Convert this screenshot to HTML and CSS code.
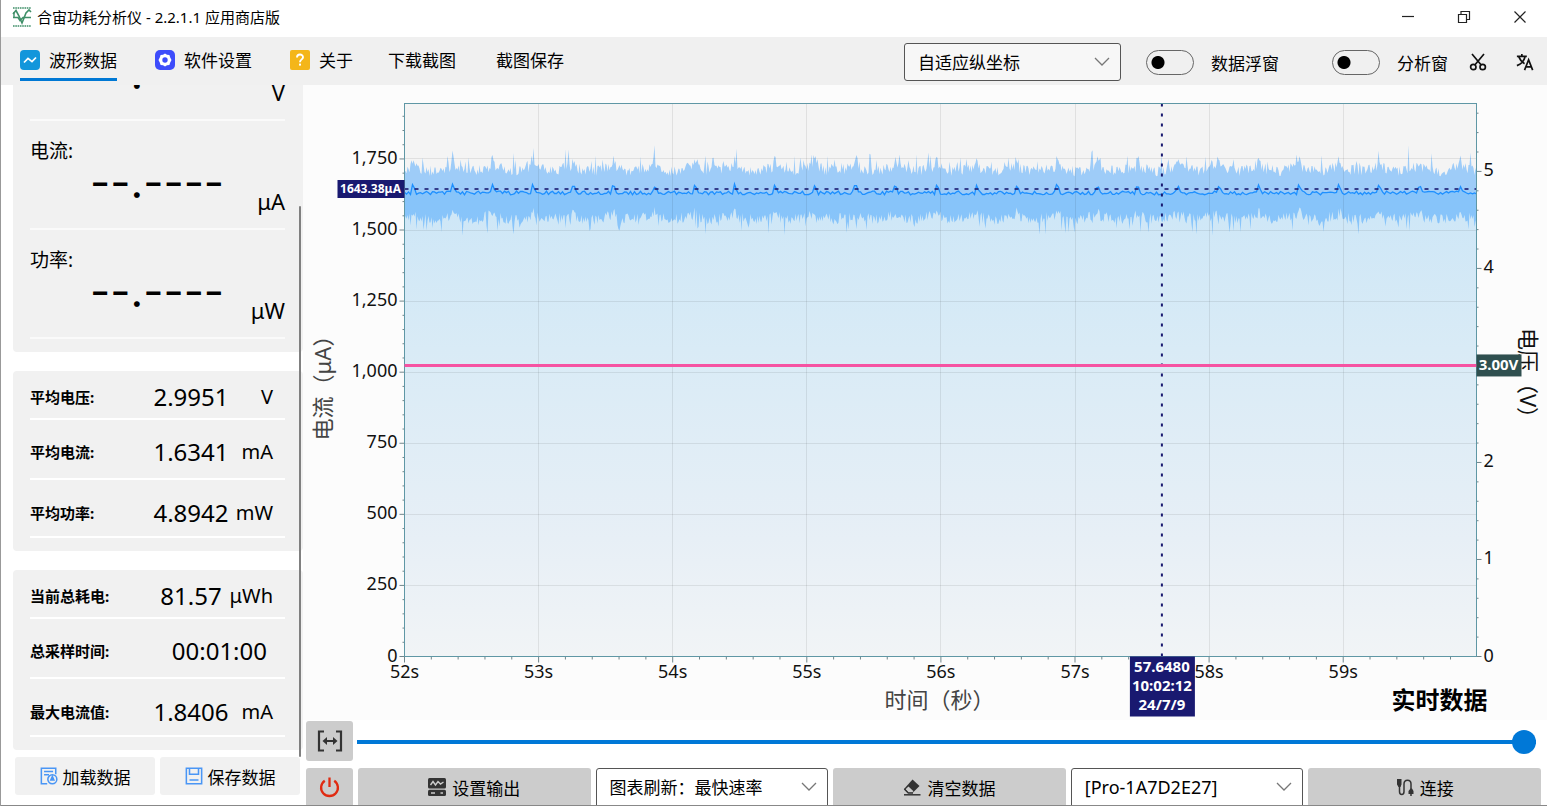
FILE: index.html
```html
<!DOCTYPE html>
<html lang="zh-CN">
<head>
<meta charset="utf-8">
<title>合宙功耗分析仪</title>
<link rel="stylesheet" href="styles.css">
</head>
<body>
<div class="app">
  <header class="titlebar">
    <svg class="logo" viewBox="0 0 20 20" fill="none" stroke="#3f8f68">
      <path d="M1 1h18M1 19h18" stroke-width="1.4" stroke-dasharray="1.6 .7"/>
      <path d="M1 7l3-3.5L7 9l3 7 4-10 3-3 2 2" stroke-width="1.6"/>
      <path d="M1 10.500h5l2 3 3-3h8" stroke-width="1.500"/>
      <path d="M2 5v6" stroke-width="1.4"/>
    </svg>
    <h1 class="app-title">合宙功耗分析仪 - 2.2.1.1 应用商店版</h1>
    <div class="window-controls">
      <button class="win-btn" aria-label="最小化"><svg viewBox="0 0 14 14"><path d="M1 6.500h12"/></svg></button>
      <button class="win-btn" aria-label="还原"><svg viewBox="0 0 14 14"><path d="M1.500 4.500h8v8h-8zM4 4.500v-3h8.500v8H9.500"/></svg></button>
      <button class="win-btn" aria-label="关闭"><svg viewBox="0 0 14 14"><path d="M1.500 1.500l11 11M12.500 1.500l-11 11"/></svg></button>
    </div>
  </header>

  <div class="toolbar">
    <nav class="tabs">
      <button class="tab tab-active">
        <svg viewBox="0 0 20 20"><rect width="20" height="20" rx="4" fill="#1296db"/><path d="M4 12.500l4-4.200 4 3.400 4-4.200" fill="none" stroke="#fff" stroke-width="1.700"/></svg>
        <span>波形数据</span>
      </button>
      <button class="tab">
        <svg viewBox="0 0 20 20"><rect width="20" height="20" rx="5" fill="#3d4cfb"/><path d="M10 3.500l2 1.300 2.400.1.700 2.300 1.400 2.800-1.400 2.800-.7 2.300-2.400.1-2 1.300-2-1.300-2.400-.1-.7-2.300L3.500 10l1.400-2.800.7-2.300L8 4.800z" fill="#fff"/><circle cx="10" cy="10" r="2.700" fill="#3d4cfb"/></svg>
        <span>软件设置</span>
      </button>
      <button class="tab">
        <svg viewBox="0 0 20 20"><rect width="20" height="20" rx="2" fill="#f4b619"/><path d="M7 7.600c0-4 6-4 6-.4 0 2.200-3 2.200-3 5" fill="none" stroke="#fff" stroke-width="1.900"/><rect x="9" y="13.600" width="2" height="2" fill="#fff"/></svg>
        <span>关于</span>
      </button>
    </nav>
    <div class="shots">
      <button class="tab">下载截图</button>
      <button class="tab">截图保存</button>
    </div>
    <div class="view-options">
      <div class="combo combo-axis">
        <select aria-label="纵坐标模式"><option>自适应纵坐标</option></select>
        <svg class="chevron" viewBox="0 0 16 10"><path d="M1 1l7 7 7-7"/></svg>
      </div>
      <label class="toggle"><input type="checkbox" role="switch"><span>数据浮窗</span></label>
      <label class="toggle toggle-last"><input type="checkbox" role="switch"><span>分析窗</span></label>
      <button class="tool" aria-label="截图">
        <svg viewBox="0 0 18 18" fill="none" stroke="#111" stroke-width="1.700"><circle cx="4.300" cy="14" r="2.700"/><circle cx="13.700" cy="14" r="2.700"/><path d="M3 1l9.200 11M15 1L5.800 12"/></svg>
      </button>
      <button class="tool" aria-label="语言">
        <svg viewBox="0 0 20 20" fill="none" stroke="#111" stroke-width="1.900"><path d="M1 3.800h11M6.500 1v2.800M3 4c1.500 4 4 6.500 6.500 8M10 4C9 9 5 12.500 1 14"/><path d="M9.500 19l4.500-11.500L18.500 19M11 15.500h6"/></svg>
      </button>
    </div>
  </div>

  <div class="body">
    <aside class="sidebar">
      <div class="pane">
        <section class="card live">
          <div class="live-row"><span class="live-name">电压:</span><span class="live-value">--.----</span><span class="live-unit">V</span></div>
          <div class="live-row"><span class="live-name">电流:</span><span class="live-value">--.----</span><span class="live-unit">μA</span></div>
          <div class="live-row"><span class="live-name">功率:</span><span class="live-value">--.----</span><span class="live-unit">μW</span></div>
        </section>
        <section class="card stats">
          <div class="stat stat-first"><span class="stat-name">平均电压:</span><span class="stat-value">2.9951</span><span class="stat-unit">V</span></div>
          <div class="stat"><span class="stat-name">平均电流:</span><span class="stat-value">1.6341</span><span class="stat-unit">mA</span></div>
          <div class="stat"><span class="stat-name">平均功率:</span><span class="stat-value">4.8942</span><span class="stat-unit">mW</span></div>
        </section>
        <section class="card stats">
          <div class="stat stat-first"><span class="stat-name">当前总耗电:</span><span class="stat-value">81.57</span><span class="stat-unit">μWh</span></div>
          <div class="stat"><span class="stat-name">总采样时间:</span><span class="stat-value stat-time">00:01:00</span></div>
          <div class="stat"><span class="stat-name">最大电流值:</span><span class="stat-value">1.8406</span><span class="stat-unit">mA</span></div>
        </section>
        <div class="scroll-thumb"></div>
      </div>
      <div class="file-actions">
        <button class="file-btn">
          <svg viewBox="0 0 20 20" fill="none" stroke="#4a96f5" stroke-width="1.700"><path d="M8 18.500H1.500v-17h16V8M4.500 5h10M4.500 8.500H10"/><circle cx="13.700" cy="13.700" r="5"/><path d="M13.700 10.500l-1.700 4h3.400z" fill="#4a96f5"/></svg>
          <span>加载数据</span>
        </button>
        <button class="file-btn">
          <svg viewBox="0 0 20 20" fill="none" stroke="#4a96f5" stroke-width="1.700"><path d="M1.500 1.500h17v17h-17zM5 1.500v6.500h10V1.500M5 14.500h10"/></svg>
          <span>保存数据</span>
        </button>
      </div>
    </aside>

    <main class="main">
      <div class="chart"><svg id="chart" role="img" aria-label="电流与电压波形"></svg></div>
      <div class="timeline">
        <button class="gray-btn" aria-label="适应宽度">
          <svg class="icon-fit" viewBox="0 0 26 22" fill="none" stroke="#333" stroke-width="2.200"><path d="M7 1.500H2v19h5M19 1.500h5v19h-5M7 11h12"/><path d="M10 7l-4.500 4 4.500 4zM16 7l4.500 4-4.500 4z" fill="#333" stroke="none"/></svg>
        </button>
        <input class="time-range" type="range" min="0" max="100" value="100" aria-label="时间位置">
      </div>
      <div class="actions">
        <button class="gray-btn" aria-label="电源">
          <svg class="icon-power" viewBox="0 0 20 20" fill="none" stroke="#e02b12" stroke-width="2.200"><path d="M10 .5v9M5.500 3.500a8 8 0 1 0 9 0"/></svg>
        </button>
        <button class="gray-btn">
          <svg viewBox="0 0 18 18"><rect width="18" height="10.500" rx="1.500" fill="#333"/><path d="M2.500 7L5 3.500 7.500 7 10 3.500 12.500 6l3-2" fill="none" stroke="#ccc" stroke-width="1.400"/><rect y="11.800" width="18" height="6.200" rx="1.500" fill="#333"/><path d="M3 15h4M12.500 15h2.500" stroke="#ccc" stroke-width="1.500"/></svg>
          <span>设置输出</span>
        </button>
        <div class="combo">
          <select aria-label="图表刷新"><option>图表刷新：最快速率</option></select>
          <svg class="chevron" viewBox="0 0 16 10"><path d="M1 1l7 7 7-7"/></svg>
        </div>
        <button class="gray-btn">
          <svg viewBox="0 0 18 18"><path d="M9.500 1.500l7 6.500-6.500 6.500H5L1 11z" fill="#333"/><path d="M5.500 8.500l5 4.700L9 14.500H5.300L2.500 11.300z" fill="#ccc"/><path d="M1 16.800h16.500" stroke="#333" stroke-width="1.500"/><path d="M1.300 11l4 4H10" fill="none" stroke="#333" stroke-width="1.400"/></svg>
          <span>清空数据</span>
        </button>
        <div class="combo combo-device">
          <select aria-label="设备"><option>[Pro-1A7D2E27]</option></select>
          <svg class="chevron" viewBox="0 0 16 10"><path d="M1 1l7 7 7-7"/></svg>
        </div>
        <button class="gray-btn">
          <svg viewBox="0 0 18 18"><path d="M1 1h4.500v5.500L4.500 9h-2L1 6.500zM14.500 10.500h1.500l1.500 2.500v3h-5v-3z" fill="#333"/><path d="M3.500 8v5.500c0 4 4.500 4 4.500 0V6c0-5 7-5 7 0v5M15 15v3" fill="none" stroke="#333" stroke-width="1.500"/></svg>
          <span>连接</span>
        </button>
      </div>
    </main>
  </div>
</div>
<script src="app.js"></script>
</body>
</html>
```
FILE: styles.css
```css
* { box-sizing: border-box; }

body {
  margin: 0;
  font-family: "Noto Sans", "Noto Sans CJK SC", sans-serif;
  font-size: 17px;
  color: #000;
  background: #fff;
}

button, select, input { font: inherit; color: inherit; margin: 0; }

button {
  border: 0;
  padding: 0;
  background: none;
  white-space: nowrap;
}

svg { display: block; flex: none; }

.app {
  position: relative;
  display: flex;
  flex-direction: column;
  height: 100vh;
  overflow: hidden;
  border-left: 1px solid #999;
}
.app::after {
  content: "";
  position: absolute;
  left: 0;
  right: 0;
  bottom: 0;
  height: 1px;
  background: #888;
}

/* Title bar */
.titlebar {
  display: flex;
  align-items: center;
  flex: none;
  height: 37px;
  padding: 0 12px 4px 11px;
}
.logo { width: 20px; height: 20px; }
.app-title {
  margin: 0 auto 0 5px;
  font-size: 15px;
  line-height: 20px;
  font-weight: 400;
}
.window-controls { display: flex; gap: 26px; }
.win-btn {
  display: grid;
  place-items: center;
  width: 30px;
  height: 30px;
}
.win-btn svg {
  width: 14px;
  height: 14px;
  fill: none;
  stroke: #222;
  stroke-width: 1.2;
}

/* Toolbar */
.toolbar {
  display: flex;
  align-items: stretch;
  flex: none;
  height: 48px;
  padding: 0 13px 0 19px;
  background: #f0f0f0;
}
.tabs { display: flex; gap: 38px; }
.shots { display: flex; gap: 40px; margin-left: 35px; }
.tab {
  display: flex;
  align-items: center;
  gap: 9px;
  height: 44px;
  padding-top: 4px;
  border-bottom: 3px solid transparent;
}
.tab svg { width: 20px; height: 20px; }
.tab-active { border-bottom-color: #0078d4; }
.view-options {
  display: flex;
  align-items: center;
  margin-left: auto;
  padding-top: 2px;
}
.combo { display: grid; align-items: center; }
.combo select {
  grid-area: 1 / 1;
  appearance: none;
  width: 100%;
  height: 38px;
  padding: 0 13px;
  border: 1px solid #555;
  border-radius: 3px;
  background: #fff;
}
.chevron {
  grid-area: 1 / 1;
  justify-self: end;
  width: 16px;
  height: 10px;
  margin-right: 11px;
  fill: none;
  stroke: #777;
  stroke-width: 1.3;
  pointer-events: none;
}
.combo-axis { width: 217px; margin-right: 25px; }
.combo-axis select { background: #f7f7f7; }
.combo-device select { font-size: 18px; }
.toggle {
  display: flex;
  align-items: center;
  gap: 17px;
  margin-right: 53px;
}
.toggle-last { margin-right: 21px; }
.toggle input {
  appearance: none;
  width: 48px;
  height: 25px;
  border: 1px solid #666;
  border-radius: 13px;
  background: radial-gradient(circle at 11px 50%, #000 6px, transparent 7px);
}
.tool + .tool { margin-left: 29px; }
.tool svg { width: 18px; height: 18px; }

/* Sidebar */
.body {
  display: grid;
  grid-template-columns: 302px minmax(0, 1fr);
  flex: 1;
  min-height: 0;
}
.sidebar {
  display: flex;
  flex-direction: column;
  min-height: 0;
}
.pane {
  position: relative;
  display: flex;
  flex-direction: column;
  justify-content: flex-end;
  gap: 19px;
  flex: 1;
  min-height: 0;
  overflow: hidden;
  padding: 0 0 7px 12px;
}
.scroll-thumb {
  position: absolute;
  right: 2px;
  bottom: 0;
  width: 2px;
  height: 82%;
  background: #808080;
  border-radius: 1px;
}
.card {
  flex: none;
  padding: 0 18px 13px 17px;
  border-radius: 4px;
  background: #f1f1f1;
}
.live-row {
  display: grid;
  grid-template-columns: 60px 1fr auto;
  grid-template-rows: 60px 47px;
  height: 109px;
  border-bottom: 2px solid #fafafa;
}
.live-name {
  grid-area: 1 / 1;
  align-self: center;
  font-size: 19px;
  line-height: 24px;
}
.live-value {
  grid-area: 1 / 2 / 3 / 3;
  align-self: center;
  font-family: Inter, "Noto Sans", sans-serif;
  font-size: 44px;
  line-height: 40px;
  padding-top: 14px;
}
.live-unit {
  grid-area: 2 / 3;
  align-self: start;
  font-size: 22px;
  line-height: 40px;
}
.stat {
  display: grid;
  grid-template-columns: 123px 76px 1fr;
  align-items: center;
  height: 60px;
  padding: 6px 12px 0 0;
  border-bottom: 2px solid #fff;
}
.stat:last-child { height: 58px; padding-top: 9px; }
.stat-first { height: 49px; padding-top: 5px; }
.stat-name { font-size: 15px; line-height: 24px; font-weight: 700; }
.stat-value { font-size: 24px; line-height: 32px; text-align: center; }
.stat-unit { font-size: 20px; line-height: 32px; text-align: right; }
.stat-time { grid-column: 2 / 4; text-align: right; padding-right: 6px; }
.file-actions {
  display: grid;
  grid-template-columns: 1fr 1fr;
  gap: 5px;
  flex: none;
  padding: 0 3px 11px 14px;
}
.file-btn {
  display: flex;
  align-items: center;
  justify-content: center;
  gap: 5px;
  height: 38px;
  border-radius: 3px;
  background: #f1f1f1;
}
.file-btn svg { width: 18px; height: 18px; }

/* Main column */
.main {
  display: flex;
  flex-direction: column;
  min-width: 0;
  min-height: 0;
}
.chart {
  flex: 1;
  min-height: 0;
  background: #fcfcfc;
}
.chart svg { width: 100%; height: 100%; }
.timeline {
  display: grid;
  grid-template-columns: 47px 1fr;
  align-items: end;
  gap: 4px;
  flex: none;
  padding: 1px 11px 7px 3px;
}
.timeline .gray-btn { height: 40px; }
.actions {
  display: grid;
  grid-template-columns: 47px repeat(5, minmax(0, 1fr));
  gap: 5px;
  flex: none;
  padding: 0 6px 0 3px;
}
.gray-btn {
  display: flex;
  align-items: center;
  justify-content: center;
  gap: 6px;
  height: 38px;
  border-radius: 3px;
  background: #ccc;
}
.actions .gray-btn, .actions .combo select { border-radius: 3px 3px 0 0; }
.gray-btn svg { width: 18px; height: 18px; }
.gray-btn .icon-fit { width: 26px; height: 22px; }
.gray-btn .icon-power { width: 21px; height: 21px; }
.time-range {
  appearance: none;
  width: 100%;
  height: 38px;
  background: linear-gradient(#0078d7, #0078d7) center / 100% 4px no-repeat;
}
.time-range::-webkit-slider-thumb {
  appearance: none;
  width: 24px;
  height: 24px;
  border-radius: 50%;
  background: #0078d7;
}

/* Chart */
.plot-bg { fill: #f4f4f4; }
.grid { stroke: #000; stroke-opacity: .08; stroke-width: 1; fill: none; }
.frame { fill: none; stroke: #5f97a5; stroke-width: 1; }
.ticks { stroke: #71858b; stroke-width: 1; fill: none; }
.band { fill: #1e90ff; fill-opacity: .4; }
.mean { fill: none; stroke: #1e90ff; stroke-width: 1.3; }
.volt-line { stroke: #f653a2; stroke-width: 3; }
.level-line { stroke: #191970; stroke-width: 2; stroke-dasharray: 4 6; stroke-opacity: .8; }
.cursor-line { stroke: #191970; stroke-width: 2; stroke-dasharray: 3 7; }
.axis-text { font-size: 18px; fill: #111; }
.axis-title { font-size: 22px; fill: #444; text-anchor: middle; }
.axis-title-volt { fill: #111; }
.end { text-anchor: end; }
.mid { text-anchor: middle; }
.badge { fill: #191970; }
.badge-volt { fill: #2f4f4f; }
.badge-text { font-size: 12px; font-weight: 700; fill: #fff; text-anchor: middle; }
.badge-large { font-size: 15px; }
.status { font-size: 24px; font-weight: 700; text-anchor: end; }
```
FILE: app.js
```js
const svg = document.getElementById('chart');
const NS = 'http://www.w3.org/2000/svg';

function add(name, attrs, text) {
  const el = document.createElementNS(NS, name);
  for (const key in attrs) el.setAttribute(key, attrs[key]);
  if (text !== undefined) el.textContent = text;
  svg.appendChild(el);
  return el;
}

function makeRandom(seed) {
  return () => {
    seed = (seed * 1664525 + 1013904223) % 4294967296;
    return seed / 4294967296;
  };
}

function draw() {
  svg.textContent = '';
  const w = svg.clientWidth, h = svg.clientHeight;
  const left = 101.5, right = w - 70.5, top = 18.5, bottom = h - 63.5;
  const plotW = right - left;
  const x = s => left + (s - 52) * plotW / 7.994;
  const y = ua => bottom - ua * (bottom - top) / 1945;
  const v = volt => bottom - volt * (bottom - top) / 5.7;
  const rnd = makeRandom(77);

  const defs = add('defs', {});
  defs.innerHTML = '<linearGradient id="area" x1="0" y1="0" x2="0" y2="1">' +
    '<stop offset="0" stop-color="#cce6f7"/><stop offset=".35" stop-color="#d9ebf6"/>' +
    '<stop offset=".75" stop-color="#e7eff6"/><stop offset="1" stop-color="#f1f4f6"/></linearGradient>';
  add('rect', { class: 'plot-bg', x: left, y: top, width: plotW, height: bottom - top });

  const upper = [], lower = [], mean = [];
  for (let px = 0; px <= plotW; px += 1) {
    const phase = (px + 34) % 40.3;
    const pulse = phase < 4 ? (4 - Math.abs(phase - 1.5)) * 7 : 0;
    const swell = Math.cos(phase / 40.3 * Math.PI * 2) * 6;
    let hi = 1695 + swell + rnd() * 38 + pulse;
    let lo = 1563 + swell - rnd() * 38 + pulse / 2;
    if (rnd() > .86) hi += rnd() * 50;
    if (rnd() > .86) lo -= rnd() * 50;
    if (px === 250 || px === 1004) hi = 1798;
    if (px === 58 || px === 808) lo = 1480;
    const X = left + px;
    upper.push(X + ',' + y(hi).toFixed(1));
    lower.push(X + ',' + y(lo).toFixed(1));
    if (px % 2 === 0) mean.push(X + ',' + y(1624 + rnd() * 13 + pulse).toFixed(1));
  }
  add('path', { fill: 'url(#area)', d: 'M' + left + ',' + bottom + 'L' + mean.join('L') + 'L' + right + ',' + bottom + 'Z' });
  add('path', { class: 'band', d: 'M' + upper.join('L') + 'L' + lower.reverse().join('L') + 'Z' });

  let grid = '', ticks = '';
  for (let s = 53; s < 60; s++) grid += `M${Math.floor(x(s)) + .5},${top}V${bottom}`;
  for (let a = 250; a <= 1750; a += 250) grid += `M${left},${Math.floor(y(a)) + .5}H${right}`;
  for (let i = 0; i < 40; i++) ticks += `M${x(52 + i / 5)},${bottom}v${i % 5 ? 3 : 6}`;
  for (let i = 0; i < 39; i++) ticks += `M${left},${y(i * 50)}h${i % 5 ? -2 : -5}`;
  for (let i = 0; i < 29; i++) ticks += `M${right},${v(i / 5)}h${i % 5 ? 2 : 5}`;
  add('path', { class: 'grid', d: grid });
  add('path', { class: 'ticks', d: ticks });
  add('path', { class: 'mean', d: 'M' + mean.join('L') });

  const level = Math.round(y(1643.38));
  const cursor = x(57.648);
  const volt = v(3);
  add('line', { class: 'level-line', x1: left, x2: right, y1: level, y2: level });
  add('line', { class: 'cursor-line', x1: cursor, x2: cursor, y1: top, y2: bottom });
  add('rect', { class: 'frame', x: left, y: top, width: plotW, height: bottom - top });
  add('line', { class: 'volt-line', x1: left, x2: right, y1: volt, y2: volt });

  for (let a = 0; a <= 1750; a += 250)
    add('text', { class: 'axis-text end', x: left - 7, y: y(a) + 5 }, a.toLocaleString('en-US'));
  for (let s = 52; s < 60; s++)
    add('text', { class: 'axis-text mid', x: x(s), y: bottom + 21 }, s + 's');
  for (const n of [0, 1, 2, 4, 5])
    add('text', { class: 'axis-text', x: right + 7, y: v(n) + 5 }, n);

  const midX = (left + right) / 2;
  add('text', { class: 'axis-title', x: midX - 1, y: bottom + 51 }, '时间（秒）');
  add('text', { class: 'axis-title', transform: `translate(28 ${top + 279}) rotate(-90)` }, '电流（μA）');
  add('text', { class: 'axis-title axis-title-volt', transform: `translate(${right + 43} ${top + 275}) rotate(90)` }, '电压（V）');

  add('rect', { class: 'badge', x: left - 67, y: level - 9, width: 67, height: 18 });
  add('text', { class: 'badge-text', x: left - 34, y: level + 4 }, '1643.38μA');
  add('rect', { class: 'badge-volt', x: right, y: volt - 11, width: 45, height: 22 });
  add('text', { class: 'badge-text badge-large', x: right + 22, y: volt + 5 }, '3.00V');
  add('rect', { class: 'badge', x: cursor - 32, y: bottom, width: 65, height: 60 });
  ['57.6480', '10:02:12', '24/7/9'].forEach((line, i) =>
    add('text', { class: 'badge-text badge-large', x: cursor, y: bottom + 15 + i * 19 }, line));
  add('text', { class: 'status', x: right + 11, y: bottom + 52 }, '实时数据');
}

draw();
window.addEventListener('resize', draw);
```
